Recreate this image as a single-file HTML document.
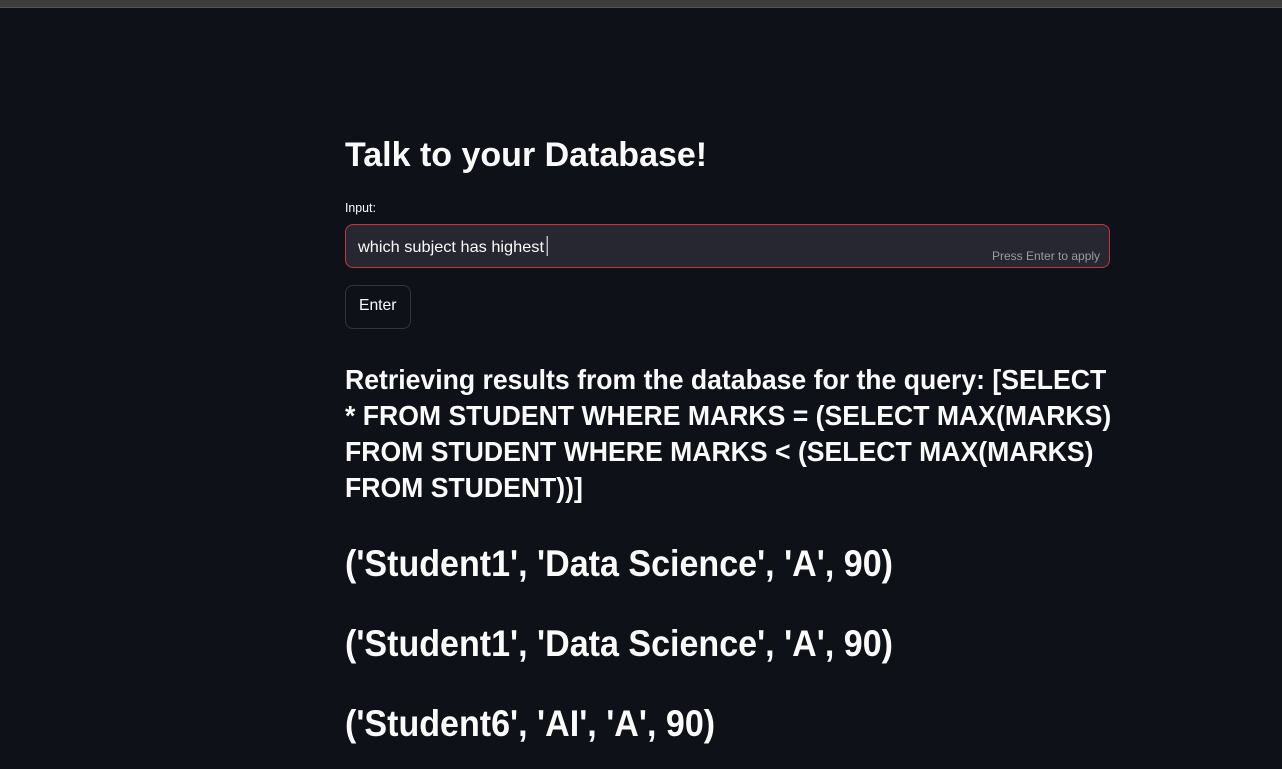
<!DOCTYPE html>
<html><head><meta charset="utf-8"><style>
html,body{margin:0;padding:0;}
body{width:1282px;height:769px;background:#0e1117;position:relative;overflow:hidden;font-family:"Liberation Sans",sans-serif;color:#fafafa;}
.top{position:absolute;left:0;top:0;width:1282px;height:7px;background:#3d3d3d;border-bottom:1px solid #555;}
.t{position:absolute;white-space:nowrap;transform-origin:left top;transform:scaleX(0.86);}
.b{font-weight:bold;}
.box{position:absolute;left:345px;top:224px;width:763px;height:42px;border:1px solid #c0393f;border-radius:8px;background:#262730;}
.btn{position:absolute;left:345px;top:285px;width:64px;height:42px;border:1px solid #33353d;border-radius:8px;background:#0e1117;}
</style></head><body>
<div class="top"></div>
<div class="t b" style="left:345px;top:136px;font-size:34px;transform:scaleX(1.0);">Talk to your Database!</div>
<div class="t" style="left:345px;top:200px;font-size:13px;transform:scaleX(0.95);">Input:</div>
<div class="box"></div>
<div class="t" style="left:358px;top:236px;font-size:16px;transform:scaleX(1.02);">which subject has highest<span style="display:inline-block;width:1px;height:20px;background:#fafafa;vertical-align:-4px;margin-left:3px"></span></div>
<div class="t" style="left:992px;top:249px;font-size:12px;color:#9a9ca3;transform:scaleX(1.0);">Press Enter to apply</div>
<div class="btn"></div>
<div class="t" style="left:359px;top:297px;font-size:16px;transform:scaleX(0.98);">Enter</div>
<div class="t b" style="left:345px;top:362px;font-size:28px;line-height:36px;transform:scaleX(0.95);">Retrieving results from the database for the query: [SELECT<br>* FROM STUDENT WHERE MARKS = (SELECT MAX(MARKS)<br>FROM STUDENT WHERE MARKS &lt; (SELECT MAX(MARKS)<br>FROM STUDENT))]</div>
<div class="t b" style="left:345px;top:543px;font-size:37px;transform:scaleX(0.92);">('Student1', 'Data Science', 'A', 90)</div>
<div class="t b" style="left:345px;top:623px;font-size:37px;transform:scaleX(0.92);">('Student1', 'Data Science', 'A', 90)</div>
<div class="t b" style="left:345px;top:703px;font-size:37px;transform:scaleX(0.92);">('Student6', 'AI', 'A', 90)</div>
</body></html>
